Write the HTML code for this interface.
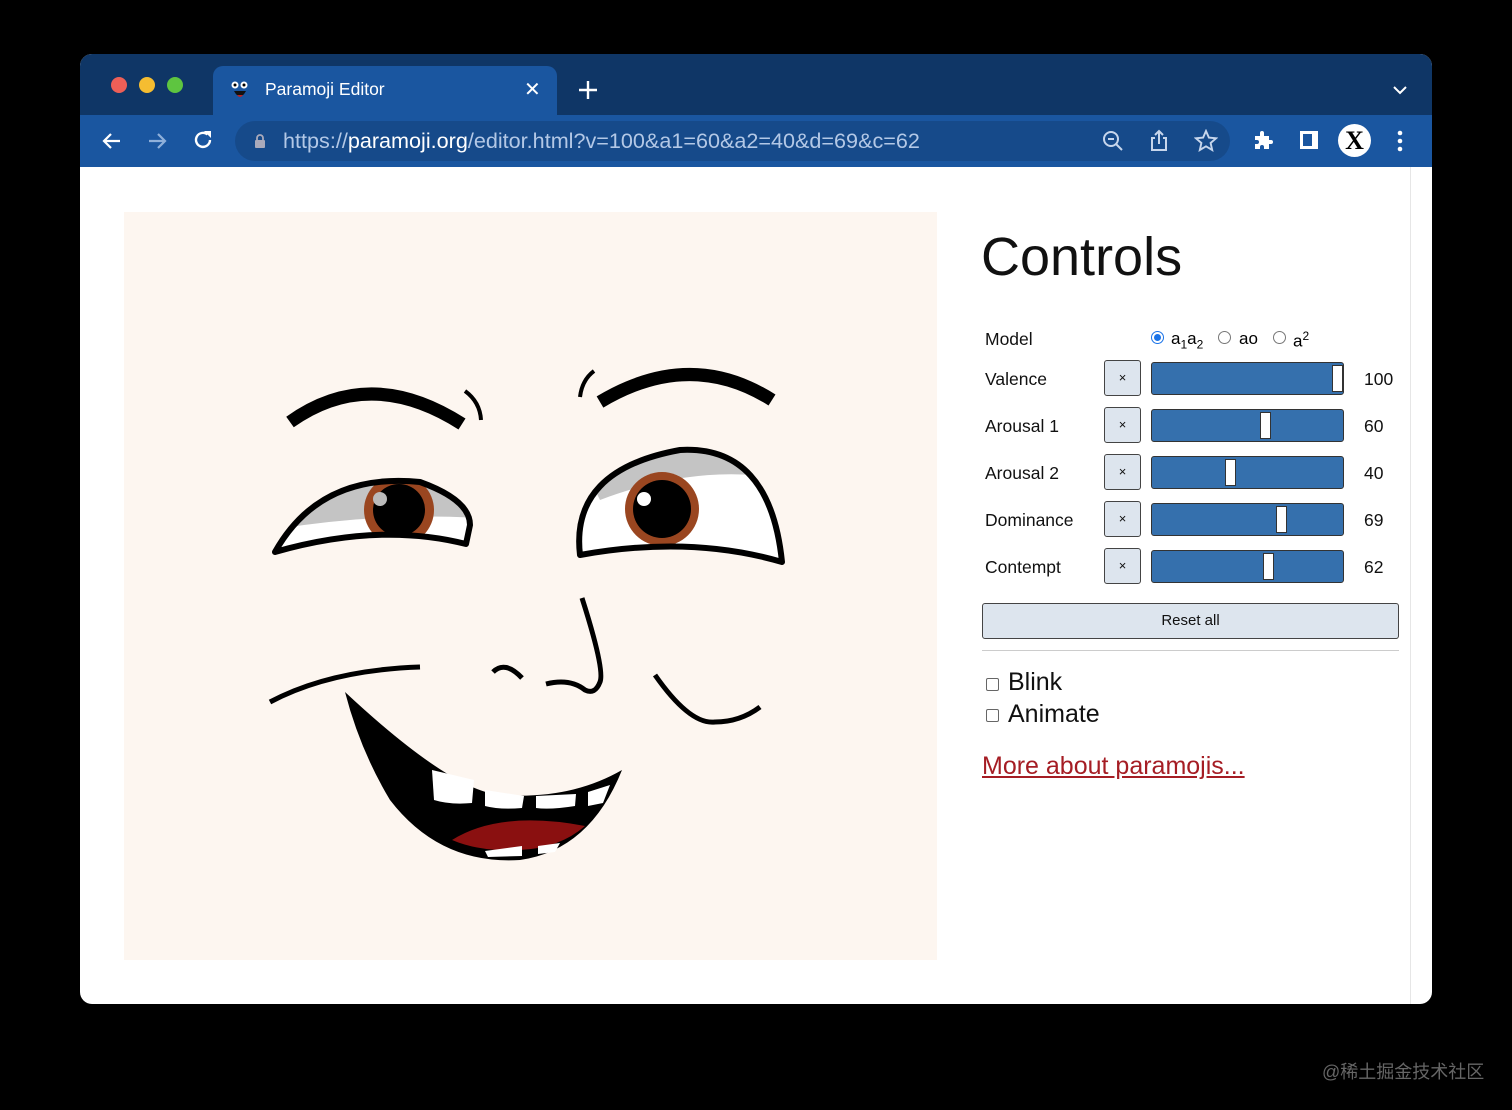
<!DOCTYPE html>
<html><head><meta charset="utf-8">
<style>
*{margin:0;padding:0;box-sizing:border-box}
body{width:1512px;height:1110px;background:#000;position:relative;overflow:hidden;font-family:"Liberation Sans",sans-serif}
.win{position:absolute;left:80px;top:54px;width:1352px;height:950px;border-radius:12px;overflow:hidden;background:#fff}
.tabs{position:absolute;left:0;top:0;width:100%;height:61px;background:#0f3666}
.tab{position:absolute;left:133px;top:12px;width:344px;height:50px;background:#1a56a0;border-radius:10px 10px 0 0}
.bar{position:absolute;left:0;top:61px;width:100%;height:52px;background:#1a56a0}
.url{position:absolute;left:155px;top:6px;width:995px;height:40px;background:#164a8a;border-radius:20px}
.abs{position:absolute}
.lbl{position:absolute;left:985px;font-size:17.5px;color:#111}
.xb{position:absolute;left:1104px;width:37px;height:36px;background:#dde5ee;border:1.5px solid #444;border-radius:3px;font-size:13px;text-align:center;line-height:33px;color:#111}
.sl{position:absolute;left:1151px;width:193px;height:33px;background:#3570ad;border:1.5px solid #333;border-radius:3px}
.th{position:absolute;top:2px;width:11px;height:27px;background:#fff;border:1px solid #333}
.val{position:absolute;left:1364px;font-size:17.5px;color:#111}
.cb{position:absolute;left:986px;width:13px;height:13px;border:1px solid #666;border-radius:2px;background:#fff}
</style></head><body>
<div class="win">
 <div class="tabs">
  <div class="abs" style="left:31px;top:23px;width:16px;height:16px;border-radius:50%;background:#ed5f57"></div>
  <div class="abs" style="left:59px;top:23px;width:16px;height:16px;border-radius:50%;background:#f5bd31"></div>
  <div class="abs" style="left:87px;top:23px;width:16px;height:16px;border-radius:50%;background:#5ec540"></div>
  <div class="tab">
   <svg class="abs" style="left:17px;top:14px" width="20" height="22"><circle cx="5" cy="5" r="3.5" fill="#fff"/><circle cx="14" cy="5" r="3.5" fill="#fff"/><circle cx="5" cy="5" r="1.5"/><circle cx="14" cy="5" r="1.5"/><path d="M4 11 Q10 22 16 11 Z" fill="#111"/><path d="M7 15 Q10 19 13 15 Z" fill="#b22"/></svg>
   <div class="abs" style="left:52px;top:13px;color:#fff;font-size:17.5px">Paramoji Editor</div>
   <div class="abs" style="left:311px;top:11px;color:#fff;font-size:20px">✕</div>
  </div>
  <svg class="abs" style="left:498px;top:26px" width="20" height="20"><path d="M10 1V19M1 10H19" stroke="#fff" stroke-width="2.4"/></svg>
  <svg class="abs" style="left:1312px;top:30px" width="16" height="12"><path d="M2 3L8 9L14 3" stroke="#fff" stroke-width="2" fill="none"/></svg>
 </div>
 <div class="bar">
  <svg class="abs" style="left:20px;top:14px" width="24" height="24"><path d="M20 12H4M11 5L4 12L11 19" stroke="#fff" stroke-width="2.2" fill="none"/></svg>
  <svg class="abs" style="left:65px;top:14px" width="24" height="24"><path d="M4 12H20M13 5L20 12L13 19" stroke="#8fb0da" stroke-width="2.2" fill="none"/></svg>
  <svg class="abs" style="left:111px;top:13px" width="24" height="24"><path d="M19 12A7 7 0 1 1 16.5 6.5" stroke="#fff" stroke-width="2.4" fill="none"/><path d="M13 3H20V10Z" fill="#fff"/></svg>
  <div class="url">
   <svg class="abs" style="left:19px;top:12px" width="12" height="16"><path d="M3 7V5A3 3 0 0 1 9 5V7" stroke="#aab" stroke-width="1.8" fill="none"/><rect x="1" y="7" width="10" height="8" rx="1" fill="#aab"/></svg>
   <div class="abs" style="left:48px;top:7px;font-size:21.6px;color:#b3c8e6;white-space:nowrap">https://<span style="color:#fff">paramoji.org</span>/editor.html?v=100&amp;a1=60&amp;a2=40&amp;d=69&amp;c=62</div>
   <svg class="abs" style="left:867px;top:9px" width="22" height="22"><circle cx="9" cy="9" r="7" stroke="#c7d6ec" stroke-width="2" fill="none"/><path d="M6 9H12M14 14L20 20" stroke="#c7d6ec" stroke-width="2"/></svg>
   <svg class="abs" style="left:913px;top:8px" width="22" height="24"><path d="M7 9H4V21H18V9H15M11 15V2M7 6L11 2L15 6" stroke="#c7d6ec" stroke-width="2" fill="none"/></svg>
   <svg class="abs" style="left:959px;top:8px" width="24" height="24"><path d="M12 2L14.9 8.6L22 9.3L16.6 14L18.2 21L12 17.3L5.8 21L7.4 14L2 9.3L9.1 8.6Z" stroke="#c7d6ec" stroke-width="1.9" fill="none"/></svg>
  </div>
  <svg class="abs" style="left:1172px;top:14px" width="22" height="22"><path d="M3 7H8V4A2 2 0 0 1 12 4V7H17V11H19A2 2 0 0 1 19 15H17V20H12V18A2 2 0 0 0 8 18V20H3V15H5A2 2 0 0 0 5 11H3Z" fill="#fff"/></svg>
  <svg class="abs" style="left:1218px;top:14px" width="22" height="22"><rect x="2" y="2" width="18" height="18" fill="#fff"/><rect x="5" y="5" width="9" height="12" fill="#1a56a0"/></svg>
  <div class="abs" style="left:1258px;top:9px;width:33px;height:33px;border-radius:50%;background:#fff;color:#000;font:bold 26px 'Liberation Serif',serif;text-align:center;line-height:34px">X</div>
  <svg class="abs" style="left:1316px;top:14px" width="8" height="24"><circle cx="4" cy="4" r="2.3" fill="#fff"/><circle cx="4" cy="12" r="2.3" fill="#fff"/><circle cx="4" cy="20" r="2.3" fill="#fff"/></svg>
 </div>
 <div class="abs" style="left:1330px;top:113px;width:1px;height:837px;background:#e6e6e6"></div>
</div>

<svg class="abs" style="left:0;top:0" width="1512" height="1110">
 <rect x="124" y="212" width="813" height="748" fill="#fdf6f0"/>
 <g fill="none" stroke="#000" stroke-linecap="butt">
  <path d="M290 422 Q370 365 462 424" stroke-width="13"/>
  <path d="M465 391 Q480 402 481 420" stroke-width="4"/>
  <path d="M600 402 Q690 348 772 400" stroke-width="13"/>
  <path d="M594 371 Q582 380 580 397" stroke-width="4"/>
 </g>
 <defs>
  <clipPath id="le"><path d="M275 552 Q320 472 420 482 Q470 500 470 525 L466 544 Q380 522 275 552Z"/></clipPath>
  <clipPath id="re"><path d="M580 555 Q570 470 680 450 Q770 445 782 562 Q690 535 580 555Z"/></clipPath>
 </defs>
 <path d="M275 552 Q320 472 420 482 Q470 500 470 525 L466 544 Q380 522 275 552Z" fill="#fff"/>
 <g clip-path="url(#le)">
  <path d="M270 470 H480 V518 Q380 512 270 530Z" fill="#c4c4c4"/>
  <circle cx="399" cy="510" r="35" fill="#9a4620"/>
  <circle cx="399" cy="510" r="26" fill="#000"/>
  <circle cx="380" cy="499" r="7" fill="#bbb"/>
 </g>
 <path d="M275 552 Q320 472 420 482 Q470 500 470 525 L466 544 Q380 522 275 552Z" fill="none" stroke="#000" stroke-width="6" stroke-linejoin="round"/>
 <path d="M580 555 Q570 470 680 450 Q770 445 782 562 Q690 535 580 555Z" fill="#fff"/>
 <g clip-path="url(#re)">
  <path d="M570 440 H790 V480 Q700 462 600 500Z" fill="#c4c4c4"/>
  <circle cx="662" cy="509" r="37" fill="#9a4620"/>
  <circle cx="662" cy="509" r="29" fill="#000"/>
  <circle cx="644" cy="499" r="7" fill="#fff"/>
 </g>
 <path d="M580 555 Q570 470 680 450 Q770 445 782 562 Q690 535 580 555Z" fill="none" stroke="#000" stroke-width="6" stroke-linejoin="round"/>
 <g fill="none" stroke="#000" stroke-width="5">
  <path d="M582 598 Q605 670 600 682 Q595 695 585 690 Q570 678 546 684"/>
  <path d="M493 672 Q505 660 522 678"/>
  <path d="M270 702 Q330 670 420 667"/>
  <path d="M655 675 Q690 725 715 722 Q740 722 760 707"/>
 </g>
 <path d="M345 692 Q450 790 500 795 Q570 800 622 770 Q590 850 520 860 Q440 865 390 800 Q360 750 345 692Z" fill="#000"/>
 <path d="M432 770 L474 780 L472 803 Q450 805 434 800Z" fill="#fff"/>
 <path d="M485 790 L524 796 L522 808 Q500 810 485 806Z" fill="#fff"/>
 <path d="M536 796 L576 794 L575 806 Q550 810 536 808Z" fill="#fff"/>
 <path d="M588 792 L610 785 L603 803 L588 806Z" fill="#fff"/>
 <path d="M452 840 Q500 810 585 826 Q560 848 520 850 Q480 852 452 840Z" fill="#8a1010"/>
 <path d="M485 851 L522 846 L522 856 L488 857Z" fill="#fff"/>
 <path d="M538 846 L560 843 L555 852 L538 854Z" fill="#fff"/>
</svg>

<div class="abs" style="left:981px;top:226px;font-size:54px;color:#111">Controls</div>
<div class="lbl" style="top:329px">Model</div>
<div class="abs" style="left:1151px;top:331px;width:13px;height:13px;border-radius:50%;border:1px solid #1a73e8;background:#fff"><div style="margin:2px;width:7px;height:7px;border-radius:50%;background:#1a73e8"></div></div>
<div class="abs" style="left:1171px;top:329px;font-size:17px">a<sub style="font-size:12px">1</sub>a<sub style="font-size:12px">2</sub></div>
<div class="abs" style="left:1218px;top:331px;width:13px;height:13px;border-radius:50%;border:1px solid #777"></div>
<div class="abs" style="left:1239px;top:329px;font-size:17px">ao</div>
<div class="abs" style="left:1273px;top:331px;width:13px;height:13px;border-radius:50%;border:1px solid #777"></div>
<div class="abs" style="left:1293px;top:329px;font-size:17px">a<sup style="font-size:12px">2</sup></div>

<div class="lbl" style="top:369px">Valence</div><div class="xb" style="top:360px">×</div><div class="sl" style="top:362px"><div class="th" style="left:180px"></div></div><div class="val" style="top:369px">100</div>
<div class="lbl" style="top:416px">Arousal 1</div><div class="xb" style="top:407px">×</div><div class="sl" style="top:409px"><div class="th" style="left:108px"></div></div><div class="val" style="top:416px">60</div>
<div class="lbl" style="top:463px">Arousal 2</div><div class="xb" style="top:454px">×</div><div class="sl" style="top:456px"><div class="th" style="left:73px"></div></div><div class="val" style="top:463px">40</div>
<div class="lbl" style="top:510px">Dominance</div><div class="xb" style="top:501px">×</div><div class="sl" style="top:503px"><div class="th" style="left:124px"></div></div><div class="val" style="top:510px">69</div>
<div class="lbl" style="top:557px">Contempt</div><div class="xb" style="top:548px">×</div><div class="sl" style="top:550px"><div class="th" style="left:111px"></div></div><div class="val" style="top:557px">62</div>

<div class="abs" style="left:982px;top:603px;width:417px;height:36px;background:#dde5ee;border:1.5px solid #444;border-radius:3px;text-align:center;line-height:33px;font-size:15px;color:#111">Reset all</div>
<div class="abs" style="left:982px;top:650px;width:417px;height:1px;background:#ccc"></div>
<div class="cb" style="top:678px"></div><div class="abs" style="left:1008px;top:668px;font-size:25px;color:#111">Blink</div>
<div class="cb" style="top:709px"></div><div class="abs" style="left:1008px;top:700px;font-size:25px;color:#111">Animate</div>
<div class="abs" style="left:982px;top:752px;font-size:25px;color:#a51d24;text-decoration:underline">More about paramojis...</div>

<div class="abs" style="left:1322px;top:1058px;font-size:18px;color:#666;font-family:'Liberation Sans','Noto Sans CJK SC',sans-serif">@稀土掘金技术社区</div>
</body></html>
